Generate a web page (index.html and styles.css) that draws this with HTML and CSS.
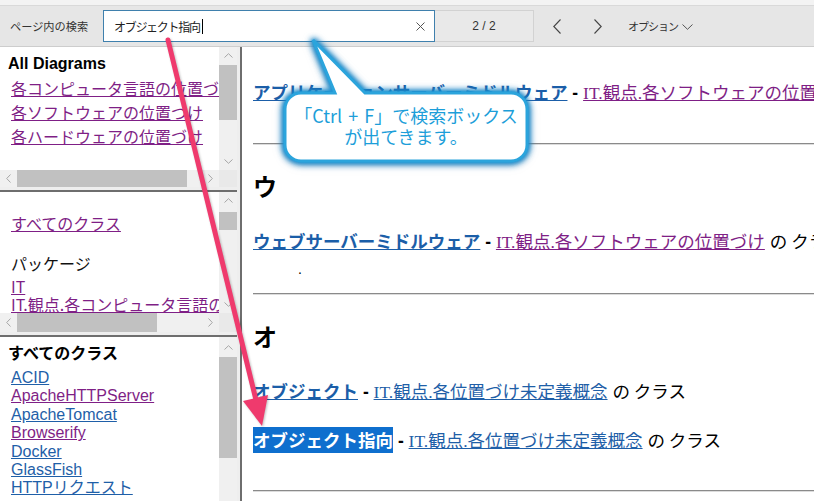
FILE: index.html
```html
<!DOCTYPE html>
<html lang="ja">
<head>
<meta charset="utf-8">
<title>ページ内の検索</title>
<link rel="stylesheet" href="styles.css">
</head>
<body>
<div class="page">
  <div class="topstrip"></div>
  <div class="toolbar">
    <span class="find-label">ページ内の検索</span>
    <div class="find-input">
      <span class="find-text">オブジェクト指向</span><span class="caret"></span>
      <svg class="clear" width="9" height="9" viewBox="0 0 9 9"><path d="M0.5 0.5L8.5 8.5M8.5 0.5L0.5 8.5" stroke="#555" stroke-width="1" fill="none"/></svg>
    </div>
    <div class="find-count">2 / 2</div>
    <svg class="nav prev" width="8" height="15" viewBox="0 0 8 15"><path d="M7.5 0.5L0.8 7.5L7.5 14.5" stroke="#444" stroke-width="1.1" fill="none"/></svg>
    <svg class="nav next" width="8" height="15" viewBox="0 0 8 15"><path d="M0.5 0.5L7.2 7.5L0.5 14.5" stroke="#444" stroke-width="1.1" fill="none"/></svg>
    <span class="options">オプション</span>
    <svg class="opt-chev" width="11" height="6" viewBox="0 0 11 6"><path d="M0.5 0.5L5.5 5.3L10.5 0.5" stroke="#555" stroke-width="1" fill="none"/></svg>
  </div>

  <div class="frames">
    <div class="left">
      <div class="frame f1">
        <div class="fcontent">
          <div class="fhead">All Diagrams</div>
          <div class="flinks">
            <a class="visited" href="#">各コンピュータ言語の位置づけ</a>
            <a class="visited" href="#">各ソフトウェアの位置づけ</a>
            <a class="visited" href="#">各ハードウェアの位置づけ</a>
          </div>
        </div>
        <div class="vscroll">
          <div class="sb-btn"><svg width="9" height="5" viewBox="0 0 9 5"><path d="M0.5 4.5L4.5 0.7L8.5 4.5" stroke="#a6a6a6" fill="none"/></svg></div>
          <div class="thumb"></div>
          <div class="sb-fill"></div>
          <div class="sb-btn"><svg width="9" height="5" viewBox="0 0 9 5"><path d="M0.5 0.5L4.5 4.3L8.5 0.5" stroke="#a6a6a6" fill="none"/></svg></div>
        </div>
        <div class="hscroll">
          <div class="sb-btn"><svg width="5" height="9" viewBox="0 0 5 9"><path d="M4.5 0.5L0.7 4.5L4.5 8.5" stroke="#a6a6a6" fill="none"/></svg></div>
          <div class="thumb"></div>
          <div class="sb-fill"></div>
          <div class="sb-btn"><svg width="5" height="9" viewBox="0 0 5 9"><path d="M0.5 0.5L4.3 4.5L0.5 8.5" stroke="#a6a6a6" fill="none"/></svg></div>
        </div>
        <div class="corner"></div>
      </div>
      <div class="sep"></div>
      <div class="frame f2">
        <div class="fcontent">
          <a class="all visited" href="#">すべてのクラス</a>
          <div class="pkghead">パッケージ</div>
          <div class="pkglist">
            <a class="visited" href="#">IT</a>
            <a class="visited" href="#">IT.観点.各コンピュータ言語の位置づけ</a>
          </div>
        </div>
        <div class="vscroll">
          <div class="sb-btn"><svg width="9" height="5" viewBox="0 0 9 5"><path d="M0.5 4.5L4.5 0.7L8.5 4.5" stroke="#a6a6a6" fill="none"/></svg></div>
          <div class="thumb"></div>
          <div class="sb-fill"></div>
          <div class="sb-btn"><svg width="9" height="5" viewBox="0 0 9 5"><path d="M0.5 0.5L4.5 4.3L8.5 0.5" stroke="#a6a6a6" fill="none"/></svg></div>
        </div>
        <div class="hscroll">
          <div class="sb-btn"><svg width="5" height="9" viewBox="0 0 5 9"><path d="M4.5 0.5L0.7 4.5L4.5 8.5" stroke="#a6a6a6" fill="none"/></svg></div>
          <div class="thumb"></div>
          <div class="sb-fill"></div>
          <div class="sb-btn"><svg width="5" height="9" viewBox="0 0 5 9"><path d="M0.5 0.5L4.3 4.5L0.5 8.5" stroke="#a6a6a6" fill="none"/></svg></div>
        </div>
        <div class="corner"></div>
      </div>
      <div class="sep"></div>
      <div class="frame f3">
        <div class="fcontent">
          <div class="fhead">すべてのクラス</div>
          <div class="clist">
            <a href="#">ACID</a>
            <a class="visited" href="#">ApacheHTTPServer</a>
            <a href="#">ApacheTomcat</a>
            <a class="visited" href="#">Browserify</a>
            <a href="#">Docker</a>
            <a href="#">GlassFish</a>
            <a href="#">HTTPリクエスト</a>
          </div>
        </div>
        <div class="vscroll">
          <div class="sb-btn"><svg width="9" height="5" viewBox="0 0 9 5"><path d="M0.5 4.5L4.5 0.7L8.5 4.5" stroke="#a6a6a6" fill="none"/></svg></div>
          <div class="thumb"></div>
          <div class="sb-fill"></div>
        </div>
      </div>
    </div>
    <div class="vdivider"></div>
    <main class="main">
      <div class="entry e1"><a class="cls" href="#">アプリケーションサーバーミドルウェア</a> <b class="dash">-</b> <a class="pkg visited" href="#">IT.観点.各ソフトウェアの位置づけ</a> <span class="suffix">の クラス</span></div>
      <div class="rule r1"></div>
      <h2 class="letter l1">ウ</h2>
      <div class="entry e2"><a class="cls" href="#">ウェブサーバーミドルウェア</a> <b class="dash">-</b> <a class="pkg visited" href="#">IT.観点.各ソフトウェアの位置づけ</a> <span class="suffix">の クラス</span></div>
      <div class="desc">.</div>
      <div class="rule r2"></div>
      <h2 class="letter l2">オ</h2>
      <div class="entry e3"><a class="cls" href="#">オブジェクト</a> <b class="dash">-</b> <a class="pkg" href="#">IT.観点.各位置づけ未定義概念</a> <span class="suffix">の クラス</span></div>
      <div class="entry e4"><a class="cls hit" href="#">オブジェクト指向</a> <b class="dash">-</b> <a class="pkg" href="#">IT.観点.各位置づけ未定義概念</a> <span class="suffix">の クラス</span></div>
      <div class="rule r3"></div>
    </main>
  </div>

  <svg class="overlay" width="814" height="501" viewBox="0 0 814 501">
    <path class="callout-shape" d="M301 93 L335 93 L313 40 L365 93 L511 93 A16 16 0 0 1 527 109 L527 145 A16 16 0 0 1 511 161 L301 161 A16 16 0 0 1 285 145 L285 109 A16 16 0 0 1 301 93 Z"/>
    <g class="pink-arrow">
      <line x1="168" y1="40" x2="256" y2="400" stroke="#ef3a6d" stroke-width="5" stroke-linecap="round"/>
      <polygon points="262,426 268,395 243,401" fill="#ef3a6d"/>
    </g>
  </svg>
  <div class="callout-text">「Ctrl + F」で検索ボックス<br>が出てきます。</div>
</div>
</body>
</html>
```

FILE: styles.css
```css
html, body {
  margin: 0;
  padding: 0;
}
body {
  font-family: "Liberation Sans", "Noto Sans CJK JP", sans-serif;
  background: #fff;
}
a {
  text-decoration: underline;
  color: #1f5fa8;
}
a.visited {
  color: #7f1f86;
}
.page {
  position: relative;
  width: 814px;
  height: 501px;
  overflow: hidden;
  display: flex;
  flex-direction: column;
  background: #fff;
}

/* ---------- find bar ---------- */
.topstrip {
  flex: none;
  height: 5px;
  background: #f3f3f3;
}
.toolbar {
  flex: none;
  height: 40px;
  border-top: 1px solid #d9d9d9;
  border-bottom: 1px solid #cdcdcd;
  background: #e6e6e6;
  display: flex;
  align-items: center;
}
.find-label {
  width: 93px;
  padding-left: 10px;
  font-family: "Noto Sans CJK JP", sans-serif;
  font-size: 11.2px;
  color: #333;
  white-space: nowrap;
}
.find-input {
  width: 330px;
  height: 30px;
  border: 1px solid #3f80ad;
  background: #fff;
  display: flex;
  align-items: center;
}
.find-text {
  padding-left: 10px;
  font-family: "Noto Sans CJK JP", sans-serif;
  font-size: 12px;
  letter-spacing: -1.3px;
  color: #222;
}
.caret {
  width: 1px;
  height: 15px;
  margin-left: 2px;
  background: #000;
}
.clear {
  margin-left: auto;
  margin-right: 9px;
}
.find-count {
  width: 98px;
  height: 30px;
  border: 1px solid #d2d2d2;
  border-left: none;
  background: #e9e9e9;
  display: flex;
  align-items: center;
  justify-content: center;
  font-size: 12px;
  color: #333;
}
.nav.prev {
  margin-left: 19px;
}
.nav.next {
  margin-left: 33px;
}
.options {
  margin-left: 26px;
  font-family: "Noto Sans CJK JP", sans-serif;
  font-size: 11px;
  letter-spacing: -1px;
  color: #333;
}
.opt-chev {
  margin-left: 4px;
  margin-top: 2px;
}

/* ---------- frames ---------- */
.frames {
  flex: 1;
  min-height: 0;
  display: flex;
}
.left {
  flex: none;
  width: 237px;
  border-right: 3px solid #eeeeee;
  display: flex;
  flex-direction: column;
}
.vdivider {
  flex: none;
  width: 2px;
  background: #6e6e6e;
}
.sep {
  flex: none;
  height: 2px;
  border-top: 3px solid #eeeeee;
  background: #6e6e6e;
}
.frame {
  display: grid;
  grid-template-columns: 219px 18px;
  grid-template-rows: 1fr 17px;
  flex: none;
}
.f1, .f2 {
  height: 140px;
}
.f2 {
  grid-template-rows: 1fr 19px;
}
.f3 {
  flex: 1;
  grid-template-rows: 1fr;
}
.fcontent {
  overflow: hidden;
  white-space: nowrap;
  font-size: 16px;
}
.fcontent a {
  display: block;
}
.fhead {
  font-weight: bold;
  font-size: 16px;
}
.f1 .fcontent {
  padding: 8px 0 0 8px;
}
.f1 .fhead {
  line-height: 18px;
}
.f1 .flinks {
  margin-top: 3px;
  padding-left: 3px;
  font-family: "Noto Sans CJK JP", sans-serif;
}
.f1 .flinks a {
  line-height: 24px;
}
.f2 .fcontent {
  padding: 19px 0 0 11px;
  font-family: "Noto Sans CJK JP", sans-serif;
}
.f2 .all {
  line-height: 24px;
}
.f2 .pkghead {
  margin-top: 16px;
  line-height: 24px;
  color: #111;
}
.f2 .pkglist {
  margin-top: 2px;
}
.f2 .pkglist a {
  line-height: 18px;
}
.f3 .fcontent {
  padding: 5px 0 0 8px;
}
.f3 .fhead {
  line-height: 20px;
  font-family: "Noto Sans CJK JP", sans-serif;
}
.f3 .clist {
  margin-top: 7px;
  padding-left: 3px;
}
.f3 .clist a {
  line-height: 18.4px;
}

/* scrollbars */
.vscroll {
  background: #f0f0f0;
  display: flex;
  flex-direction: column;
}
.hscroll {
  background: #f0f0f0;
  display: flex;
}
.corner {
  background: #e9e9e9;
}
.sb-btn {
  flex: none;
  width: 17px;
  height: 17px;
  display: flex;
  align-items: center;
  justify-content: center;
}
.vscroll .sb-btn {
  width: 18px;
}
.hscroll .sb-btn {
  height: auto;
}
.sb-fill {
  flex: 1;
}
.thumb {
  flex: none;
  background: #c1c1c1;
}
.f1 .vscroll .thumb {
  margin-top: 1px;
  height: 55px;
}
.f1 .hscroll .thumb {
  width: 170px;
}
.f2 .vscroll .thumb {
  margin-top: 3px;
  height: 18px;
}
.f2 .hscroll .thumb {
  width: 140px;
}
.f3 .vscroll .sb-btn {
  height: 20px;
}
.f3 .vscroll .thumb {
  height: 101px;
}

/* ---------- main document ---------- */
.main {
  flex: 1;
  min-width: 0;
  overflow: hidden;
  padding-top: 32px;
  padding-left: 11px;
  white-space: nowrap;
}
.entry {
  height: 26px;
  line-height: 26px;
  font-size: 17.5px;
  color: #000;
}
.cls {
  font-family: "Noto Sans CJK JP", sans-serif;
  font-weight: bold;
  color: #1b5ea8;
}
.cls.hit {
  display: inline-block;
  height: 26px;
  line-height: 26px;
  background: #0f6fce;
  color: #fff;
  text-decoration: none;
}
.dash {
  font-weight: bold;
}
.pkg {
  font-family: "Liberation Serif", "Noto Sans CJK JP", serif;
}
.suffix {
  font-family: "Noto Sans CJK JP", sans-serif;
}
.rule {
  height: 0;
  border-top: 1px solid #8a8a8a;
  border-bottom: 1px solid #dcdcdc;
}
.letter {
  margin: 0;
  height: 30px;
  line-height: 30px;
  font-family: "Noto Sans CJK JP", sans-serif;
  font-size: 24px;
  font-weight: bold;
}
.desc {
  height: 18px;
  line-height: 18px;
  padding-left: 45px;
  font-size: 14px;
}
.r1 { margin-top: 38px; }
.l1 { margin-top: 26px; }
.e2 { margin-top: 27px; }
.desc { margin-top: 6px; }
.r2 { margin-top: 15px; }
.l2 { margin-top: 26px; }
.e3 { margin-top: 27px; }
.e4 { margin-top: 23px; }
.r3 { margin-top: 37px; }

/* ---------- annotation overlay ---------- */
.overlay {
  position: absolute;
  left: 0;
  top: 0;
  pointer-events: none;
}
.callout-shape {
  fill: #fff;
  stroke: #2ba4dc;
  stroke-width: 3;
  filter: drop-shadow(0 0 2px #1a8fd0) drop-shadow(0 0 3px rgba(30, 150, 215, 0.9)) drop-shadow(0 1px 2px rgba(20, 90, 150, 0.6));
}
.pink-arrow {
  filter: drop-shadow(1px 1px 1px rgba(0, 0, 0, 0.25));
}
.callout-text {
  position: absolute;
  left: 285px;
  top: 105px;
  width: 242px;
  text-align: center;
  font-family: "Noto Sans CJK JP", sans-serif;
  font-size: 18px;
  line-height: 21px;
  word-spacing: 2px;
  color: #1c9ed9;
  white-space: nowrap;
}
```
